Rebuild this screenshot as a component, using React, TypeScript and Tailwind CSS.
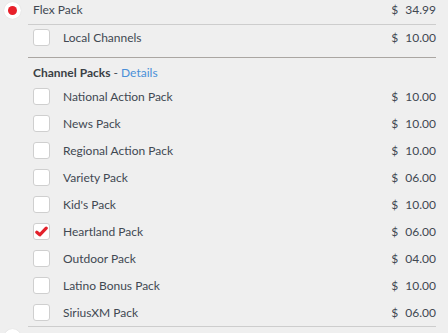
import React from 'react';

type Pack = { name: string; price: string; checked?: boolean };

const packs: Pack[] = [
  { name: 'National Action Pack', price: '10.00' },
  { name: 'News Pack', price: '10.00' },
  { name: 'Regional Action Pack', price: '10.00' },
  { name: 'Variety Pack', price: '06.00' },
  { name: "Kid's Pack", price: '10.00' },
  { name: 'Heartland Pack', price: '06.00', checked: true },
  { name: 'Outdoor Pack', price: '04.00' },
  { name: 'Latino Bonus Pack', price: '10.00' },
  { name: 'SiriusXM Pack', price: '06.00' },
];

function Checkbox({ checked }: { checked?: boolean }) {
  return (
    <div className="w-[17px] h-[17px] rounded-[3px] border border-[#cfcfcf] bg-white flex items-center justify-center shrink-0">
      {checked && (
        <svg width="13" height="11" viewBox="0 0 13 11">
          <path d="M1.8 6.2 L4.8 8.8 L11.2 2.2" fill="none" stroke="#e3212b" strokeWidth="3.2" strokeLinecap="round" strokeLinejoin="round" />
        </svg>
      )}
    </div>
  );
}

function Price({ value }: { value: string }) {
  return (
    <div className="flex items-center">
      <span className="mr-[7px]">$</span>
      <span>{value}</span>
    </div>
  );
}

export default function App() {
  return (
    <div className="w-[448px] h-[333px] overflow-hidden bg-[#efefef] font-['Lato',sans-serif] text-[12px] text-[#414852] leading-[20px]">
      <div className="flex">
        <div className="w-[28px] shrink-0 pl-[4px] pt-[2px]">
          <div className="w-[17px] h-[17px] rounded-full bg-white flex items-center justify-center shadow-[0_0_1px_rgba(0,0,0,0.15)]">
            <div className="w-[9px] h-[9px] rounded-full bg-[#e8202a]" />
          </div>
        </div>
        <div className="flex-1 mr-[12px]">
          <div className="flex items-center justify-between h-[20px] pl-[5px] mb-[4px]">
            <span>Flex Pack</span>
            <Price value="34.99" />
          </div>
          <div className="border-t border-[#cdcdcd]" />
          <div className="flex items-center h-[25px] pl-[5px] mb-[7px]">
            <Checkbox />
            <span className="ml-[13px] flex-1">Local Channels</span>
            <Price value="10.00" />
          </div>
          <div className="border-t border-[#aaa6a2]" />
          <div className="pt-[5px] pl-[5px] h-[25px]">
            <span className="font-bold text-[#3a3f45]">Channel Packs</span>
            <span> - </span>
            <span className="text-[#4a8fd8]">Details</span>
          </div>
          {packs.map(p => (
            <div key={p.name} className="flex items-center h-[27px] pl-[5px]">
              <Checkbox checked={p.checked} />
              <span className="ml-[13px] flex-1">{p.name}</span>
              <Price value={p.price} />
            </div>
          ))}
          <div className="border-t border-[#cdcdcd]" />
        </div>
      </div>
      <div className="flex pl-[4px] pt-[2px]">
        <div className="w-[17px] h-[17px] rounded-full bg-white shadow-[0_0_1px_rgba(0,0,0,0.15)]" />
      </div>
    </div>
  );
}
